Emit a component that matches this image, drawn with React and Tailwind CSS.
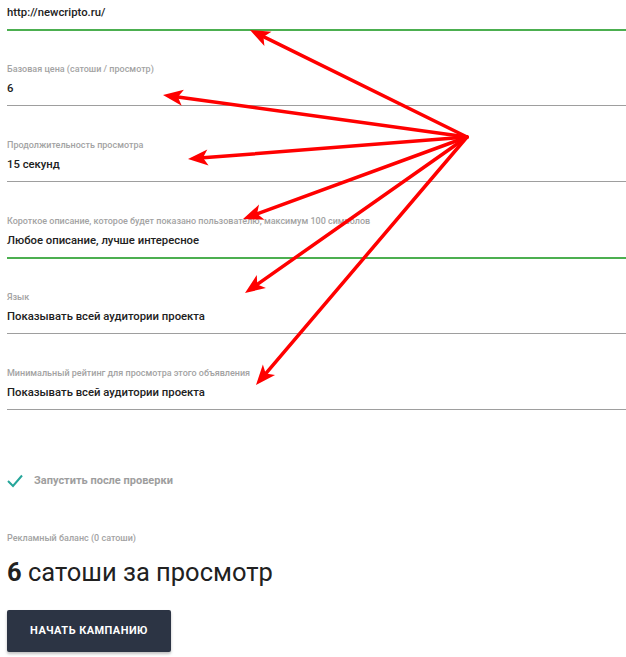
import React from "react";

function Field({ label, value, green }) {
  return (
    <div className={`mt-[32px] ${green ? "border-b-2 border-[#4caf50] -mb-px" : "border-b border-[#9e9e9e]"}`}>
      <div className="h-[14px] leading-[14px] text-[9px] font-medium text-[#a3a3a3]">{label}</div>
      <div className="mt-[4px] h-[18px] leading-[18px] text-[11.3px] font-medium text-[#212121]">{value}</div>
      <div className="h-[7px]" />
    </div>
  );
}

function Arrow({ from, to }) {
  const [x1, y1] = from;
  const [x2, y2] = to;
  const dx = x2 - x1;
  const dy = y2 - y1;
  const len = Math.hypot(dx, dy);
  const ux = dx / len;
  const uy = dy / len;
  const hl = 20;
  const hw = 8;
  const bx = x2 - ux * hl;
  const by = y2 - uy * hl;
  const p1 = `${bx - uy * hw},${by + ux * hw}`;
  const p2 = `${bx + uy * hw},${by - ux * hw}`;
  const notchX = x2 - ux * (hl - 5);
  const notchY = y2 - uy * (hl - 5);
  return (
    <g>
      <line x1={x1} y1={y1} x2={notchX} y2={notchY} stroke="#ff0000" strokeWidth="3.5" strokeLinecap="round" />
      <polygon points={`${x2},${y2} ${p1} ${notchX},${notchY} ${p2}`} fill="#ff0000" />
    </g>
  );
}

export default function App() {
  const origin = [467, 137];
  const tips = [
    [250, 30],
    [163, 95],
    [188, 159],
    [243, 219],
    [245, 293],
    [256, 385],
  ];
  return (
    <div
      className="relative w-[626px] h-[657px] overflow-hidden bg-white pl-[7px]"
      style={{ fontFamily: "Roboto, 'Noto Sans', sans-serif" }}
    >
      <div className="border-b-2 border-[#4caf50] -mb-px pt-[4px]">
        <div className="h-[18px] leading-[18px] text-[11.3px] font-medium text-[#212121]">http://newcripto.ru/</div>
        <div className="h-[7px]" />
      </div>
      <Field label="Базовая цена (сатоши / просмотр)" value="6" />
      <Field label="Продолжительность просмотра" value="15 секунд" />
      <Field
        label="Короткое описание, которое будет показано пользователю, максимум 100 символов"
        value="Любое описание, лучше интересное"
        green
      />
      <Field label="Язык" value="Показывать всей аудитории проекта" />
      <Field label="Минимальный рейтинг для просмотра этого объявления" value="Показывать всей аудитории проекта" />

      <div className="mt-[62px] flex items-center gap-[11px] h-[18px]">
        <svg width="16" height="14" viewBox="0 0 16 14" className="shrink-0">
          <polyline points="1,7 6,12 15,1.5" fill="none" stroke="#26a69a" strokeWidth="2" />
        </svg>
        <span className="text-[11px] font-bold text-[#9e9e9e]">Запустить после проверки</span>
      </div>

      <div className="mt-[41px] h-[14px] leading-[14px] text-[9px] font-medium text-[#a3a3a3]">Рекламный баланс (0 сатоши)</div>

      <div className="mt-[12px] h-[30px] leading-[30px] text-[25.5px] text-[#212121]">
        <span className="font-bold">6</span> сатоши за просмотр
      </div>

      <button className="mt-[23px] w-[164px] h-[42px] rounded-[2px] bg-[#2c3444] text-white text-[11px] font-bold uppercase tracking-[0.45px] shadow-[0_2px_3px_rgba(0,0,0,0.25)]">
        Начать кампанию
      </button>

      <svg className="absolute inset-0 pointer-events-none" width="626" height="657">
        {tips.map((t, i) => (
          <Arrow key={i} from={origin} to={t} />
        ))}
      </svg>
    </div>
  );
}
